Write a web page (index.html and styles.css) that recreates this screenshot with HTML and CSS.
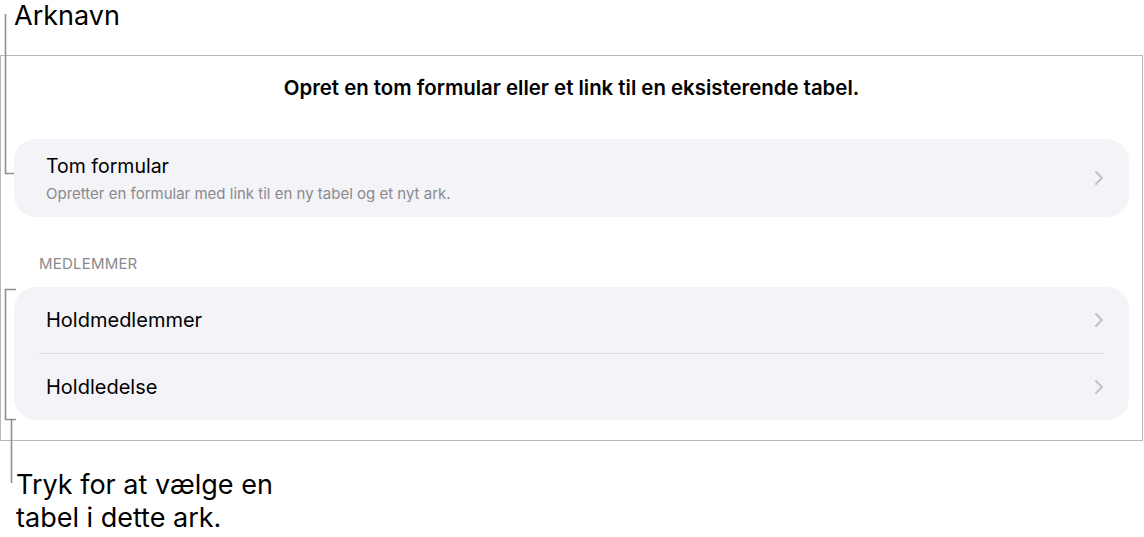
FILE: index.html
```html
<!DOCTYPE html>
<html lang="da">
<head>
    <meta charset="UTF-8">
    <meta name="viewport" content="width=device-width, initial-scale=1.0">
    <title>Arknavn</title>
    <link rel="stylesheet" href="styles.css">
</head>
<body>
    <div class="callout callout-top">Arknavn</div>

    <div class="sheet">
        <p class="prompt">Opret en tom formular eller et link til en eksisterende tabel.</p>

        <div class="group">
            <div class="row row-tall">
                <div class="row-text">
                    <div class="row-title row-title-sm">Tom formular</div>
                    <div class="row-sub">Opretter en formular med link til en ny tabel og et nyt ark.</div>
                </div>
                <svg class="chevron" viewBox="0 0 10 16"><path d="M2 2 L8 8 L2 14"/></svg>
            </div>
        </div>

        <div class="section-label">MEDLEMMER</div>

        <div class="group">
            <div class="row">
                <div class="row-title">Holdmedlemmer</div>
                <svg class="chevron" viewBox="0 0 10 16"><path d="M2 2 L8 8 L2 14"/></svg>
            </div>
            <div class="row">
                <div class="row-title">Holdledelse</div>
                <svg class="chevron" viewBox="0 0 10 16"><path d="M2 2 L8 8 L2 14"/></svg>
            </div>
        </div>
    </div>

    <div class="callout callout-bottom">Tryk for at vælge en<br>tabel i dette ark.</div>

    <!-- leader lines for the callouts -->
    <svg class="leaders" width="40" height="537">
        <path d="M5.5 14 V173.5 H14"/>
        <path d="M16 289.5 H5.5 V419.5 H16"/>
        <path d="M11.5 419.5 V483"/>
    </svg>
</body>
</html>
```

FILE: styles.css
```css
body {
    margin: 0;
    padding: 0;
    width: 1144px;
    height: 537px;
    overflow: hidden;
    position: relative;
    background: #fff;
    color: #000;
    font-family: Inter, "Noto Sans", sans-serif;
}

.callout {
    font-size: 27px;
    line-height: 33px;
    padding-left: 15px;
}

.callout-top {
    height: 55px;
    line-height: 32px;
    padding-left: 14px;
}

.callout-bottom {
    padding-top: 27px;
    padding-left: 16px;
}

.leaders {
    position: absolute;
    left: 0;
    top: 0;
}

.leaders path {
    fill: none;
    stroke: #8f8f8f;
    stroke-width: 1.6;
}

.sheet {
    box-sizing: border-box;
    width: 1143px;
    height: 386px;
    border: 1px solid #b8b8b8;
    padding: 0 13px;
}

.prompt {
    margin: 0;
    padding-top: 20px;
    font-size: 20.4px;
    line-height: 24px;
    font-weight: 600;
    text-align: center;
    margin-bottom: 39px;
}

.group {
    background: #f3f3f8;
    border-radius: 22px;
    padding: 0 25px 0 32px;
}

.row {
    display: flex;
    align-items: center;
    justify-content: space-between;
    height: 66px;
}

.row + .row {
    border-top: 1px solid #dddde1;
    margin-left: -7px;
    padding-left: 7px;
    height: 66px;
}

.row-tall {
    height: 78px;
}

.row-title {
    font-size: 20px;
    line-height: 24px;
}

.row-title-sm {
    font-size: 19.5px;
}

.row-sub {
    margin-top: 7px;
    font-size: 15px;
    line-height: 18px;
    color: #8a8a8e;
}

.chevron {
    width: 10px;
    height: 16px;
    flex: none;
}

.chevron path {
    fill: none;
    stroke: #c2c2c6;
    stroke-width: 2;
    stroke-linecap: round;
    stroke-linejoin: round;
}

.section-label {
    margin: 38px 0 14px 25px;
    font-size: 15px;
    line-height: 18px;
    color: #8a8a8e;
    letter-spacing: 0.2px;
}
```
